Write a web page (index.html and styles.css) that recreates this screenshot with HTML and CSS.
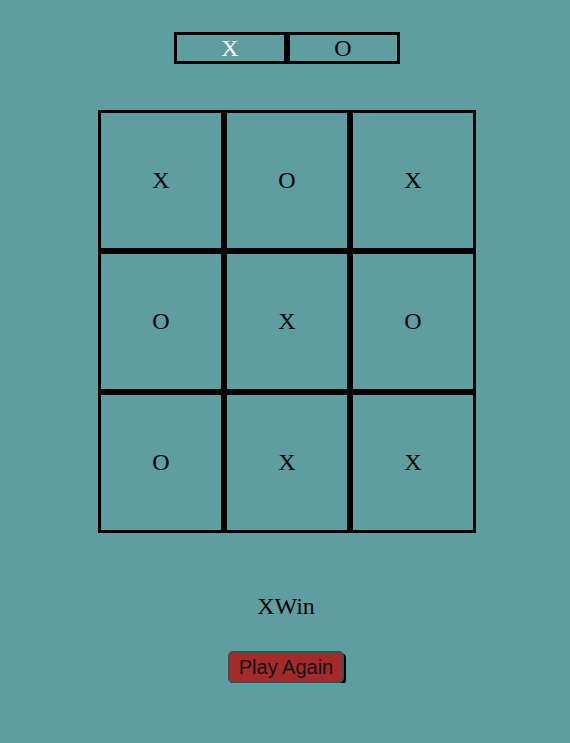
FILE: index.html
```html
<!DOCTYPE html>
<html>
<head>
<meta charset="utf-8">
<link rel="stylesheet" href="styles.css">
</head>
<body>
<div class="app">
  <div class="score">
    <div class="turn active">X</div>
    <div class="turn">O</div>
  </div>
  <div class="board">
    <div class="cell">X</div>
    <div class="cell">O</div>
    <div class="cell">X</div>
    <div class="cell">O</div>
    <div class="cell">X</div>
    <div class="cell">O</div>
    <div class="cell">O</div>
    <div class="cell">X</div>
    <div class="cell">X</div>
  </div>
  <div class="result">XWin</div>
  <button class="again">Play Again</button>
</div>
</body>
</html>
```

FILE: styles.css
```css
html, body {
  margin: 0;
  padding: 0;
  background: #5f9ea0;
}
body {
  font-family: "Liberation Serif", "Times New Roman", serif;
  color: #000;
}
.app {
  display: flex;
  flex-direction: column;
  align-items: center;
  padding-top: 32px;
  padding-left: 4px;
}
.score {
  display: flex;
  margin-left: -1px;
}
.turn {
  box-sizing: border-box;
  width: 113px;
  height: 32px;
  border: 3px solid #000;
  display: flex;
  align-items: center;
  justify-content: center;
  font-size: 24px;
  line-height: 1;
  color: #000;
}
.turn.active {
  color: #fff;
  width: 113px;
}
.board {
  margin-top: 46px;
  display: grid;
  grid-template-columns: repeat(3, 126px);
  grid-template-rows: repeat(3, 141px);
}
.cell {
  box-sizing: border-box;
  border: 3px solid #000;
  display: flex;
  align-items: center;
  justify-content: center;
  font-size: 24px;
}
.result {
  margin-top: 59px;
  font-size: 24px;
  line-height: 28px;
  margin-left: -2px;
}
.again {
  margin-top: 31px;
  box-sizing: border-box;
  height: 32px;
  padding: 0 9px;
  background: #a52a2a;
  color: #111;
  border: 2px solid #4a4a4a;
  border-radius: 5px;
  box-shadow: 2px 2px 0 #000;
  font-family: "Liberation Sans", Arial, sans-serif;
  font-size: 20px;
  line-height: 1;
  margin-left: -2px;
}
```
